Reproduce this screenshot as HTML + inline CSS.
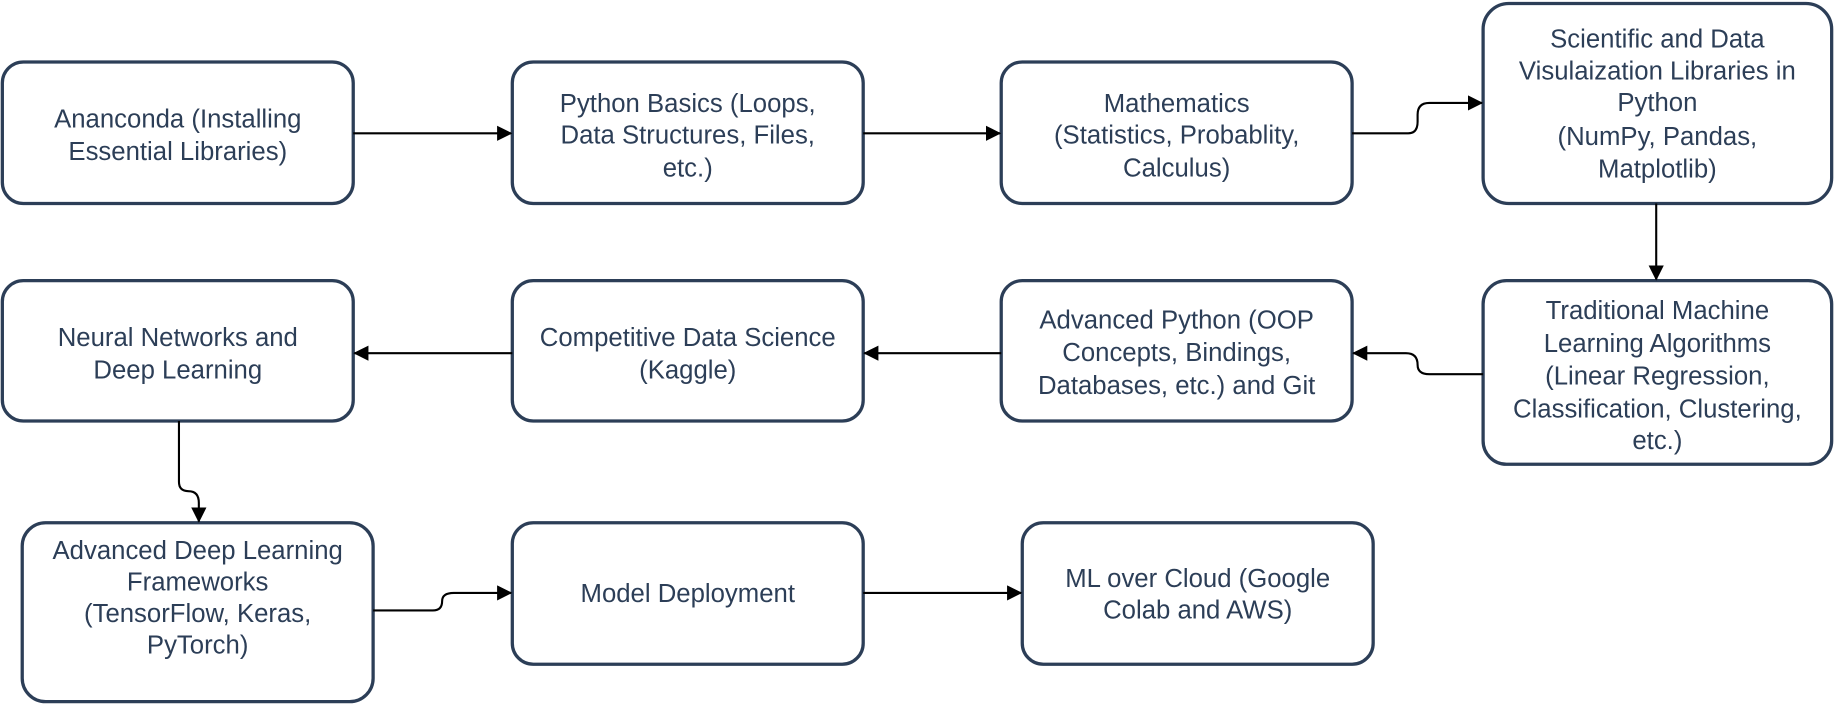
<!DOCTYPE html>
<html><head><meta charset="utf-8"><style>
html,body{margin:0;padding:0;background:#fff;}
svg{display:block;}
text{font-family:"Liberation Sans",sans-serif;font-size:22px;fill:#2c3e57;text-anchor:middle;dominant-baseline:central;}
.b{fill:#fff;stroke:#2c3e57;stroke-width:2.8;}
.l{fill:none;stroke:#000;stroke-width:1.8;}
</style></head><body>
<svg width="1834" height="704" viewBox="0 0 1568 602" preserveAspectRatio="none">
<defs><marker id="a" markerWidth="13" markerHeight="13" refX="12" refY="6.5" orient="auto" markerUnits="userSpaceOnUse"><path d="M0,0 L13,6.5 L0,13 Z" fill="#000"/></marker></defs>
<rect class="b" x="2" y="53" width="300" height="121" rx="18"/>
<rect class="b" x="438" y="53" width="300" height="121" rx="18"/>
<rect class="b" x="856" y="53" width="300" height="121" rx="18"/>
<rect class="b" x="1268" y="3" width="298" height="171" rx="22"/>
<rect class="b" x="1268" y="240" width="298" height="157" rx="20"/>
<rect class="b" x="856" y="240" width="300" height="120" rx="18"/>
<rect class="b" x="438" y="240" width="300" height="120" rx="18"/>
<rect class="b" x="2" y="240" width="300" height="120" rx="18"/>
<rect class="b" x="19" y="447" width="300" height="153" rx="20"/>
<rect class="b" x="438" y="447" width="300" height="121" rx="18"/>
<rect class="b" x="874" y="447" width="300" height="121" rx="18"/>

<path class="l" marker-end="url(#a)" d="M302,114 H437"/>
<path class="l" marker-end="url(#a)" d="M738,114 H855"/>
<path class="l" marker-end="url(#a)" d="M1156,114 H1204 Q1212,114 1212,104 V98 Q1212,88 1222,88 H1267"/>
<path class="l" marker-end="url(#a)" d="M1416,174 V239"/>
<path class="l" marker-end="url(#a)" d="M1268,320 H1222 Q1212,320 1212,312 Q1212,302 1202,302 H1157"/>
<path class="l" marker-end="url(#a)" d="M856,302 H739"/>
<path class="l" marker-end="url(#a)" d="M438,302 H303"/>
<path class="l" marker-end="url(#a)" d="M153,360 V412 Q153,420 161,420 Q170,420 170,430 V446"/>
<path class="l" marker-end="url(#a)" d="M319,522 H370 Q378,522 378,514 Q378,507 388,507 H437"/>
<path class="l" marker-end="url(#a)" d="M738,507 H873"/>

<text x="152" y="102">Ananconda (Installing</text>
<text x="152" y="130">Essential Libraries)</text>
<text x="588" y="89">Python Basics (Loops,</text>
<text x="588" y="116">Data Structures, Files,</text>
<text x="588" y="144">etc.)</text>
<text x="1006" y="89">Mathematics</text>
<text x="1006" y="116">(Statistics, Probablity,</text>
<text x="1006" y="144">Calculus)</text>
<text x="1417" y="34">Scientific and Data</text>
<text x="1417" y="61">Visulaization Libraries in</text>
<text x="1417" y="88">Python</text>
<text x="1417" y="117">(NumPy, Pandas,</text>
<text x="1417" y="145">Matplotlib)</text>
<text x="1417" y="266">Traditional Machine</text>
<text x="1417" y="294">Learning Algorithms</text>
<text x="1417" y="322">(Linear Regression,</text>
<text x="1417" y="350">Classification, Clustering,</text>
<text x="1417" y="377">etc.)</text>
<text x="1006" y="274">Advanced Python (OOP</text>
<text x="1006" y="302">Concepts, Bindings,</text>
<text x="1006" y="330">Databases, etc.) and Git</text>
<text x="588" y="289">Competitive Data Science</text>
<text x="588" y="317">(Kaggle)</text>
<text x="152" y="289">Neural Networks and</text>
<text x="152" y="317">Deep Learning</text>
<text x="169" y="471">Advanced Deep Learning</text>
<text x="169" y="498">Frameworks</text>
<text x="169" y="525">(TensorFlow, Keras,</text>
<text x="169" y="552">PyTorch)</text>
<text x="588" y="508">Model Deployment</text>
<text x="1024" y="495">ML over Cloud (Google</text>
<text x="1024" y="522">Colab and AWS)</text>
</svg>
</body></html>
